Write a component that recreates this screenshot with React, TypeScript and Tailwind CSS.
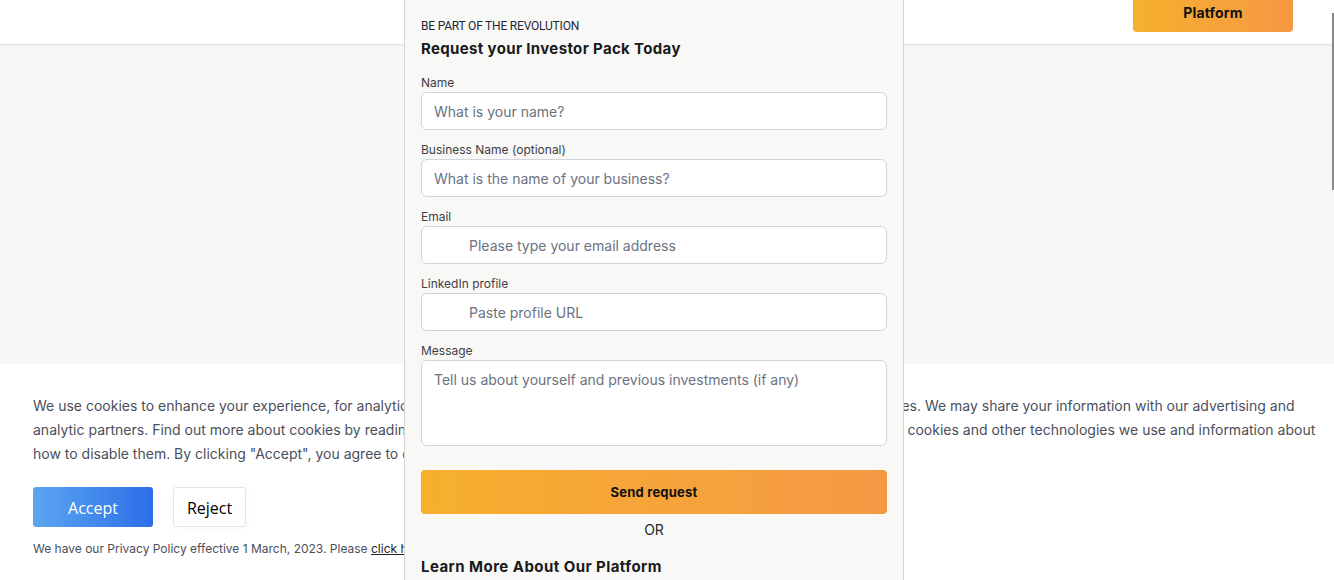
const Field: React.FC<{ label: string; placeholder: string; indent?: boolean }> = ({
  label,
  placeholder,
  indent,
}) => {
  return (
    <div className="mb-[11px]">
      <label className="block text-[12px] leading-[18px] text-[#3f3f46]">{label}</label>
      <input
        className={
          "block w-full h-[38px] rounded-md border border-[#d1d5db] bg-white text-[14px] text-[#111827] placeholder:text-[#6b7280] outline-none " +
          (indent ? "pl-[47px] pr-3" : "px-3")
        }
        placeholder={placeholder}
      />
    </div>
  );
};

export default function App() {
  return (
    <div className="relative h-[580px] w-full overflow-hidden bg-[#f7f7f5] font-['Inter',sans-serif]">
      {/* header */}
      <header className="h-[45px] bg-white border-b border-[#e4e4e4] shadow-[0_1px_3px_rgba(0,0,0,0.04)] flex justify-end pr-[41px]">
        <button className="w-[160px] h-[32px] pb-[8px] rounded-b-[4px] bg-gradient-to-r from-[#f6b02c] to-[#f59844] text-[14px] font-bold tracking-[0.2px] text-[#111]">
          Platform
        </button>
      </header>

      <div className="h-[319px]" />

      {/* cookie banner */}
      <section className="bg-white h-[216px] pl-[33px] pr-[12px] pt-[30px]">
        <p className="text-[14px] leading-6 text-[#4a4f5c]">
          We use cookies to enhance your experience, for analytics and to show offers tailored to your interests on
          our site and on partner sites. We may share your information with our advertising and analytic partners. Find
          out more about cookies by reading our Cookie Policy. You can see our Privacy Policy to learn more about the
          cookies and other technologies we use and information about how to disable them. By clicking "Accept", you
          agree to our use of cookies.
        </p>
        <div className="mt-[21px] flex gap-[20px]">
          <button className="w-[120px] h-[40px] pt-[1px] rounded-[3px] bg-gradient-to-r from-[#5ca6f0] to-[#2d6de8] text-white text-[16px] font-['Open_Sans',sans-serif]">
            Accept
          </button>
          <button className="w-[73px] h-[40px] pt-[1px] rounded-[3px] bg-white border border-[#e3e4f0] shadow-[0_0_12px_rgba(0,0,0,0.03)] text-black text-[16px] font-['Open_Sans',sans-serif]">
            Reject
          </button>
        </div>
        <p className="mt-[14px] text-[12px] leading-4 text-[#4a4f5c]">
          We have our Privacy Policy effective 1 March, 2023. Please{" "}
          <a className="underline text-[#222]">click here</a> to read it.
        </p>
      </section>

      {/* modal */}
      <div className="absolute left-[404px] top-0 w-[500px] h-[600px] bg-[#f8f8f6] border-x border-[#d4d4d4] px-4 pt-[18px]">
        <div className="text-[12px] leading-4 uppercase text-[#1f2933] font-['Roboto',sans-serif] tracking-[-0.2px]">
          Be part of the revolution
        </div>
        <h2 className="mt-[5px] text-[15px] leading-5 font-bold tracking-[0.35px] text-[#1a1a1a]">
          Request your Investor Pack Today
        </h2>
        <form className="mt-[15px]">
          <Field label="Name" placeholder="What is your name?" />
          <Field label="Business Name (optional)" placeholder="What is the name of your business?" />
          <Field label="Email" placeholder="Please type your email address" indent />
          <Field label="LinkedIn profile" placeholder="Paste profile URL" indent />
          <div>
            <label className="block text-[12px] leading-[18px] text-[#3f3f46]">Message</label>
            <textarea
              className="block w-full h-[86px] resize-none rounded-md border border-[#d1d5db] bg-white px-3 py-[9px] text-[14px] leading-5 placeholder:text-[#6b7280] outline-none"
              placeholder="Tell us about yourself and previous investments (if any)"
            />
          </div>
          <button
            type="button"
            className="mt-[24px] w-full h-[44px] pt-[1px] rounded-[4px] bg-gradient-to-r from-[#f6b02c] to-[#f59844] text-[13px] font-bold tracking-[0.2px] text-[#111]"
          >
            Send request
          </button>
        </form>
        <div className="mt-[6px] text-center text-[14px] leading-5 text-[#1f2937]">OR</div>
        <h3 className="mt-[17px] text-[15px] leading-5 font-bold tracking-[0.45px] text-[#1a1a1a]">
          Learn More About Our Platform
        </h3>
      </div>

      {/* scrollbar */}
      <div className="absolute right-0 top-[13px] w-[2px] h-[177px] bg-[#8a8a8a]" />
    </div>
  );
}
